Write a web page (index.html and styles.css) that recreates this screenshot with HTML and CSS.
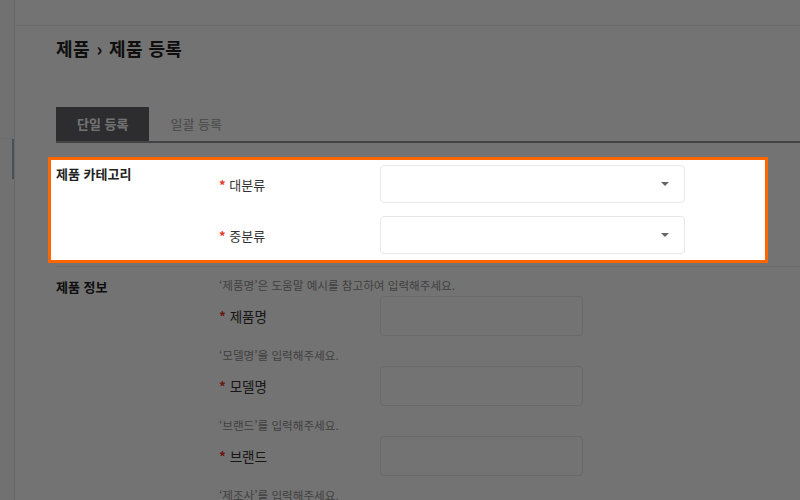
FILE: index.html
```html
<!DOCTYPE html>
<html lang="ko">
<head>
<meta charset="utf-8">
<title>제품 등록</title>
<link rel="stylesheet" href="styles.css">
</head>
<body>
<div class="app">
  <aside class="sidebar">
    <div class="side-top"></div>
    <div class="side-item active"></div>
  </aside>
  <main class="main">
    <header class="topbar"></header>
    <div class="content">
      <h1 class="title">제품 <span class="sep">›</span> 제품 등록</h1>
      <nav class="tabs">
        <span class="tab active">단일 등록</span>
        <span class="tab">일괄 등록</span>
      </nav>

      <section class="group spotlight">
        <div class="group-title">제품 카테고리</div>
        <div class="fields cat-fields">
          <div class="field-row">
            <label class="label"><span class="req">*</span> 대분류</label>
            <div class="select"><span class="caret"></span></div>
          </div>
          <div class="field-row">
            <label class="label"><span class="req">*</span> 중분류</label>
            <div class="select"><span class="caret"></span></div>
          </div>
        </div>
      </section>

      <section class="group info">
        <div class="group-title">제품 정보</div>
        <div class="fields">
          <div class="field">
            <p class="help">‘제품명’은 도움말 예시를 참고하여 입력해주세요.</p>
            <div class="field-row">
              <label class="label big"><span class="req">*</span> 제품명</label>
              <div class="input"></div>
            </div>
          </div>
          <div class="field">
            <p class="help">‘모델명’을 입력해주세요.</p>
            <div class="field-row">
              <label class="label big"><span class="req">*</span> 모델명</label>
              <div class="input"></div>
            </div>
          </div>
          <div class="field">
            <p class="help">‘브랜드’를 입력해주세요.</p>
            <div class="field-row">
              <label class="label big"><span class="req">*</span> 브랜드</label>
              <div class="input"></div>
            </div>
          </div>
          <div class="field">
            <p class="help">‘제조사’를 입력해주세요.</p>
            <div class="field-row">
              <label class="label big"><span class="req">*</span> 제조사</label>
              <div class="input"></div>
            </div>
          </div>
        </div>
      </section>
    </div>
  </main>
</div>
</body>
</html>
```

FILE: styles.css
```css
html, body {
  margin: 0;
  padding: 0;
  height: 100%;
  overflow: hidden;
  background: #ffffff;
}
body {
  font-family: "Noto Sans CJK KR", "Noto Sans", sans-serif;
  color: #333;
}
.app {
  display: flex;
  min-height: 100%;
}
.sidebar {
  width: 14px;
  flex: 0 0 14px;
  background: #fbfbfb;
  border-right: 1px solid #e4e4e4;
  display: flex;
  flex-direction: column;
}
.side-top {
  height: 138px;
  border-bottom: 1px solid #f0f0f0;
}
.side-item {
  height: 40px;
}
.side-item.active {
  box-shadow: inset -2px 0 0 #9ab6d0;
}
.main {
  flex: 1;
  min-width: 0;
  display: flex;
  flex-direction: column;
}
.topbar {
  height: 25px;
  border-bottom: 1px solid #ececec;
}
.content {
  padding: 9px 0 0 41px;
}
.title {
  margin: 0;
  font-size: 18px;
  line-height: 26px;
  font-weight: 700;
  color: #222;
  letter-spacing: 0.4px;
}
.title .sep {
  display: inline-block;
  margin: 0 1px;
  font-weight: 700;
}
.tabs {
  margin-top: 46px;
  display: flex;
  border-bottom: 2px solid #959595;
}
.tab {
  height: 34px;
  line-height: 34px;
  padding: 0 20px 0 21px;
  font-size: 13px;
  color: #b0b0b0;
  font-weight: 500;
}
.tab.active {
  padding: 0 21px 0 21px;
  background: #646468;
  color: #ffffff;
  font-weight: 700;
}
.group {
  display: flex;
}
.group-title {
  width: 163px;
  flex: 0 0 163px;
  font-size: 13px;
  line-height: 18px;
  font-weight: 700;
  color: #222;
}
.fields {
  display: flex;
  flex-direction: column;
}
.spotlight {
  position: relative;
  z-index: 5;
  margin: 14px 32px 0 -8px;
  padding: 5px 0 6px 5px;
  border: 3px solid #ff6600;
  background: #ffffff;
  box-shadow: 0 0 0 2000px rgba(0, 0, 0, 0.55);
}
.cat-fields {
  gap: 13px;
}
.field-row {
  display: flex;
  align-items: center;
}
.label {
  width: 161px;
  flex: 0 0 161px;
  font-size: 13px;
  color: #333;
}
.label.big {
  font-size: 13.5px;
  color: #333;
}
.req {
  color: #e8352a;
  font-weight: 700;
}
.select {
  width: 288px;
  height: 36px;
  border: 1px solid #e8e8e8;
  border-radius: 4px;
  background: #fff;
  display: flex;
  align-items: center;
  justify-content: flex-end;
  padding-right: 15px;
  box-sizing: content-box;
}
.caret {
  width: 0;
  height: 0;
  border-left: 4px solid transparent;
  border-right: 4px solid transparent;
  border-top: 4px solid #666;
}
.info {
  margin-top: 3px;
  border-top: 1px solid #ececec;
  padding-top: 9px;
}
.info .group-title {
  padding-top: 2px;
}
.field {
  margin-bottom: 10px;
}
.help {
  margin: 0 0 2px 0;
  font-size: 11.6px;
  line-height: 18px;
  color: #909090;
  white-space: nowrap;
}
.input {
  width: 201px;
  height: 38px;
  border: 1px solid #e8e8e8;
  border-radius: 4px;
  background: #fff;
}
```
